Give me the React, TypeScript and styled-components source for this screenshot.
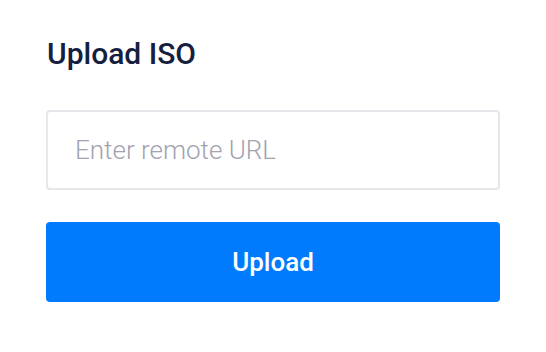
import styled, { createGlobalStyle } from "styled-components";

const GlobalStyle = createGlobalStyle`
  body {
    margin: 0;
    background: #fff;
    font-family: Roboto, "Liberation Sans", sans-serif;
  }
`;

const Panel = styled.div`
  display: flex;
  flex-direction: column;
  width: 454px;
  padding: 38px 46px 0;
`;

const Title = styled.h2`
  margin: 0 0 40px 1px;
  font-size: 30px;
  line-height: 32px;
  font-weight: 500;
  color: #15203f;
`;

const UrlInput = styled.input`
  box-sizing: border-box;
  width: 100%;
  height: 80px;
  padding: 0 27px;
  border: 2px solid #e6e6eb;
  border-radius: 4px;
  font-family: inherit;
  font-size: 26px;
  font-weight: 300;
  color: #15203f;
  outline: none;

  &::placeholder {
    color: #a2a2b0;
  }
`;

const UploadButton = styled.button`
  height: 80px;
  margin-top: 32px;
  border: none;
  border-radius: 4px;
  background: #017bfe;
  font-family: inherit;
  font-size: 26px;
  font-weight: 500;
  color: #fff;
  cursor: pointer;
`;

export default function App() {
  return (
    <>
      <GlobalStyle />
      <Panel>
        <Title>Upload ISO</Title>
        <UrlInput type="text" placeholder="Enter remote URL" />
        <UploadButton>Upload</UploadButton>
      </Panel>
    </>
  );
}
